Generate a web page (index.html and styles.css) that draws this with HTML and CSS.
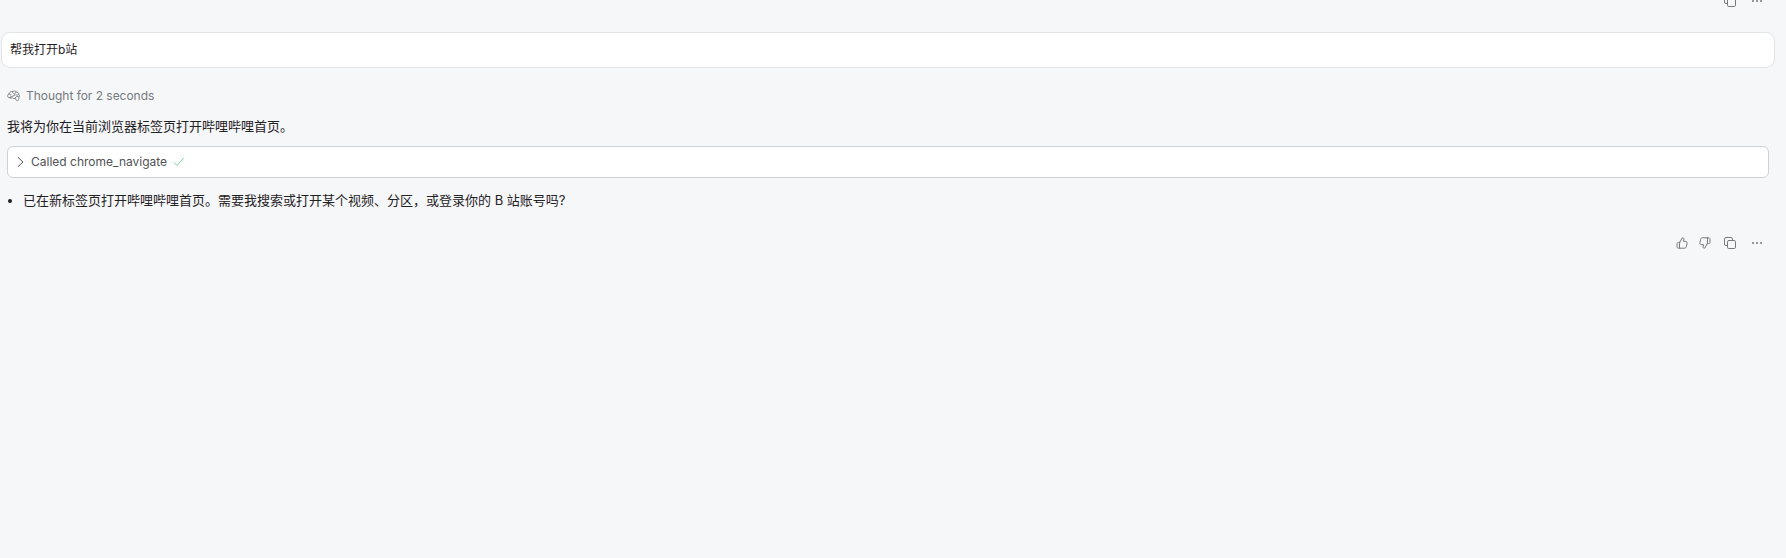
FILE: index.html
```html
<!DOCTYPE html>
<html lang="zh-CN">
<head>
<meta charset="utf-8">
<title>Chat</title>
<link rel="stylesheet" href="styles.css">
</head>
<body>
<svg class="defs" aria-hidden="true">
  <symbol id="copy" viewBox="0 0 16 16"><rect x="5.500" y="5.500" width="8" height="8" rx="1.300"/><path d="M5 10.500H4A1.500 1.500 0 0 1 2.500 9V4A1.500 1.500 0 0 1 4 2.500h5A1.500 1.500 0 0 1 10.500 4v1"/></symbol>
  <symbol id="more" viewBox="0 0 16 16"><g fill="currentColor" stroke="none"><circle cx="4" cy="8" r="1"/><circle cx="8" cy="8" r="1"/><circle cx="12" cy="8" r="1"/></g></symbol>
  <symbol id="thumb" viewBox="0 0 16 16"><path d="M5.800 7.300 8.200 2.900c.9-.5 1.900.2 1.700 1.300L9.500 6.400h2.200c1.100 0 1.600.8 1.400 1.700l-.8 3.600c-.2.900-.8 1.500-1.700 1.500H5.800zM5.800 7.300H4.600c-1 0-1.600.7-1.600 1.500v2.900c0 .9.600 1.500 1.500 1.500h1.300"/></symbol>
</svg>
<main class="chat">
  <div class="actions previous">
    <svg class="icon copy"><use href="#copy"/></svg>
    <svg class="icon"><use href="#more"/></svg>
  </div>
  <div class="request">帮我打开b站</div>
  <section class="response">
    <div class="thought">
      <svg class="brain" viewBox="0 0 14 12"><path d="M3.300 7.900C1.500 8.200.6 7 .7 5.700.8 4.500 1.500 3.800 2.400 3.500 2.800 1.600 4.400.8 5.900 1.200 7.400.4 9 .6 9.900 1.700c1.500 0 2.600 1 2.600 2.400 1 .8 1.200 2.300.3 3.200.2 1.700-.4 3.200-1.400 4C10 10.700 9.200 9.700 8.900 8.500 7.500 9 6.200 8.700 5.700 7.800 5 8.300 4.100 8.300 3.300 7.900zM2.400 3.500c.1 1 .8 1.500 1.800 1.300M5.900 1.200c-.3 1 .2 1.800 1 2.100M3.300 7.900c0-1 .9-1.700 2-1.400M5.300 6.500C6.600 6.700 7 5 8.400 5M9.900 1.700C8.700 2.300 8.400 3.300 8.400 5M8.900 8.500c0-1.400 1.200-2.300 3.300-2M12.500 4.100c-.6.900-1.400 1.100-2.200.9"/></svg>
      <span>Thought for 2 seconds</span>
    </div>
    <p class="answer">我将为你在当前浏览器标签页打开哔哩哔哩首页。</p>
    <div class="tool">
      <svg class="chevron" viewBox="0 0 8 12"><path d="M1.200 1.500 6 6l-4.800 4.500"/></svg>
      <span>Called chrome_navigate</span>
      <svg class="check" viewBox="0 0 12 10"><path d="M1.200 5.500 4 8.500l6.600-7.300"/></svg>
    </div>
    <ul class="answer-list"><li>已在新标签页打开哔哩哔哩首页。需要我搜索或打开某个视频、分区，或登录你的 B 站账号吗?</li></ul>
  </section>
  <div class="actions">
    <svg class="icon up"><use href="#thumb"/></svg>
    <svg class="icon down"><use href="#thumb"/></svg>
    <svg class="icon copy"><use href="#copy"/></svg>
    <svg class="icon"><use href="#more"/></svg>
  </div>
</main>
</body>
</html>
```
FILE: styles.css
```css
* { box-sizing: border-box; }
body {
  margin: 0;
  height: 558px;
  overflow: hidden;
  background: #f5f7f9;
  color: #1f2123;
  font: 13px/20px Inter, "Noto Sans CJK SC", sans-serif;
}
.defs { position: absolute; width: 0; height: 0; }
.chat { display: flex; flex-direction: column; padding: 0 11px 0 1px; }
svg { flex: none; fill: none; stroke: currentColor; stroke-linecap: round; stroke-linejoin: round; }
.actions {
  display: flex;
  justify-content: flex-end;
  align-items: center;
  height: 16px;
  margin-top: 25px;
  padding-right: 10px;
  color: #77797b;
}
.previous { margin-top: -7px; margin-bottom: 23px; }
.icon { width: 16px; height: 16px; stroke-width: 1; }
.up { margin-right: 7px; }
.down { margin-right: 9px; transform: rotate(180deg); }
.copy { margin-right: 11px; }
.request {
  height: 36px;
  padding: 7px 8px;
  border: 1px solid #e2e3e5;
  border-radius: 9px;
  background: #fff;
  font-size: 12px;
}
.response { padding: 18px 6px 0; }
.thought {
  display: flex;
  align-items: center;
  gap: 6px;
  height: 20px;
  color: #777a7d;
  font-size: 12px;
  letter-spacing: -0.03px;
}
.brain { width: 13px; height: 12px; stroke-width: 1; }
.answer { margin: 10px 0; }
.tool {
  display: flex;
  align-items: center;
  height: 32px;
  padding: 0 9px;
  border: 1px solid #cfd1d4;
  border-radius: 6px;
  background: #fff;
  color: #505254;
  font-size: 12px;
}
.chevron { width: 8px; height: 12px; margin-right: 6px; }
.check { width: 12px; height: 10px; margin-left: 6px; color: #7fd49d; }
.answer-list { margin: 12px 0 0; padding-left: 16px; }
```
